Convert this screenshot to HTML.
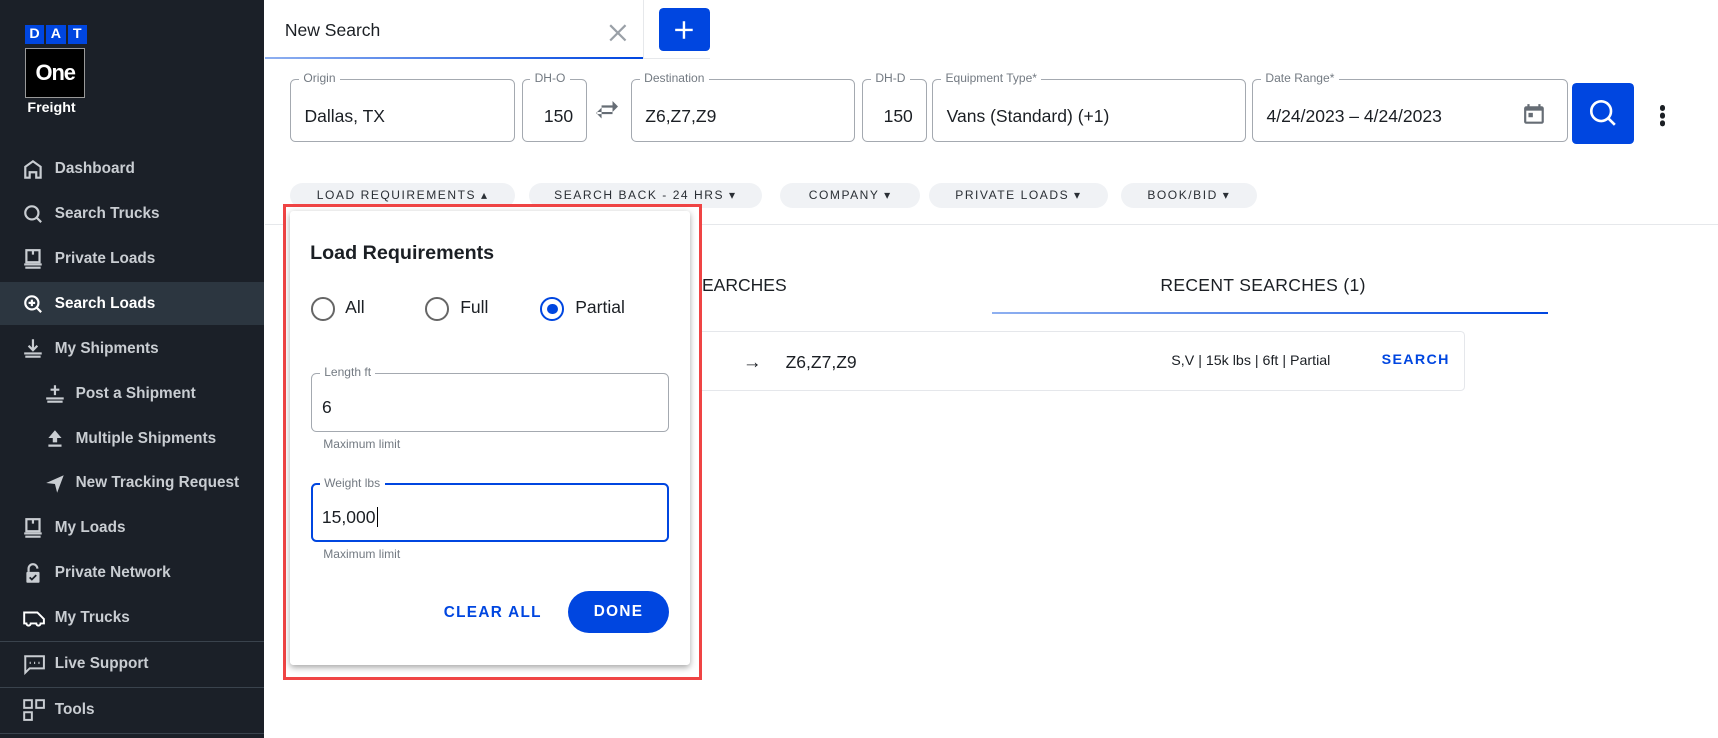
<!DOCTYPE html>
<html><head><meta charset="utf-8"><style>
html,body{margin:0;padding:0;overflow:hidden;background:#fff}
body{width:1718px;height:738px}
#r{zoom:1.0957;width:1568px;height:674px;position:relative;font-family:"Liberation Sans",sans-serif;color:#1b1f24}
.a{position:absolute}
#sb{left:0;top:0;width:241px;height:674px;background:#1b2028}
.nav{position:absolute;left:50px;font-weight:bold;font-size:14px;color:#c9cdd2;white-space:nowrap}
.ic{position:absolute;left:20px}
.dv{position:absolute;left:0;width:241px;height:1px;background:#3a434d}
.fld{position:absolute;top:72px;height:58px;border:1px solid #a4a9b0;border-radius:5px;box-sizing:border-box}
.fld .l{position:absolute;top:-8px;left:7px;background:#fff;padding:0 4px;font-size:11px;color:#737a82}
.fld .v{position:absolute;top:24px;font-size:16px;color:#1b1f24}
.chip{position:absolute;top:167px;height:23px;background:#f0f2f5;border-radius:12px;font-size:11px;letter-spacing:1.4px;color:#2a2f35;text-align:center;line-height:23px}
.db{width:17px;height:17px;background:#0046e0;color:#fff;font-weight:bold;font-size:13px;text-align:center;line-height:17px}
</style></head><body><div id="r">
<div id="sb" class="a">
 <div class="a" style="left:23px;top:23px;display:flex;gap:2px">
  <div class="db">D</div><div class="db" style="width:18px">A</div><div class="db">T</div>
 </div>
 <div class="a" style="left:23px;top:44px;width:53px;height:44px;background:#000;border:1px solid #999;color:#fff;font-weight:bold;font-size:20px;text-align:center;line-height:44px;letter-spacing:-1px">One</div>
 <div class="a" style="left:25px;top:91px;color:#fff;font-weight:bold;font-size:13px">Freight</div>
 <div class="a" style="left:0;top:257px;width:241px;height:40px;background:#2c3640"></div>
 <svg class="ic" style="top:144px" width="20" height="20" viewBox="0 0 20 20" fill="none" stroke="#c9cdd2" stroke-width="2"><path d="M3 18V8l7-5 7 5v10h-4v-5H7v5z"/></svg>
 <div class="nav" style="top:146px">Dashboard</div>
 <svg class="ic" style="top:185px" width="20" height="20" viewBox="0 0 20 20" fill="none" stroke="#c9cdd2" stroke-width="2"><circle cx="9" cy="9" r="6"/><path d="M13.5 13.5l4 4"/></svg>
 <div class="nav" style="top:187px">Search Trucks</div>
 <svg class="ic" style="top:226px" width="20" height="20" viewBox="0 0 20 20" fill="none" stroke="#c9cdd2" stroke-width="2"><rect x="4" y="2" width="12" height="11"/><path d="M10 2v4M2 15h16M3 18h14"/></svg>
 <div class="nav" style="top:228px">Private Loads</div>
 <svg class="ic" style="top:267px" width="20" height="20" viewBox="0 0 20 20" fill="none" stroke="#fff" stroke-width="2"><circle cx="9" cy="9" r="6"/><path d="M13.5 13.5l4 4M9 6v6M6 9h6"/></svg>
 <div class="nav" style="top:269px;color:#fff">Search Loads</div>
 <svg class="ic" style="top:308px" width="20" height="20" viewBox="0 0 20 20" fill="none" stroke="#c9cdd2" stroke-width="2"><path d="M10 2v9M6 8l4 4 4-4M2 15h16M3 18h14"/></svg>
 <div class="nav" style="top:310px">My Shipments</div>
 <svg class="ic" style="top:349px;left:40px" width="20" height="20" viewBox="0 0 20 20" fill="none" stroke="#c9cdd2" stroke-width="2"><path d="M10 3v9M6 7h8M2 15h16M3 18h14"/></svg>
 <div class="nav" style="top:351px;left:69px">Post a Shipment</div>
 <svg class="ic" style="top:390px;left:40px" width="20" height="20" viewBox="0 0 20 20" fill="#c9cdd2"><path d="M10 3l6 7h-4v4H8v-4H4zM4 16h12v2H4z"/></svg>
 <div class="nav" style="top:392px;left:69px">Multiple Shipments</div>
 <svg class="ic" style="top:431px;left:40px" width="20" height="20" viewBox="0 0 20 20" fill="#c9cdd2"><path d="M2 10L18 3 12 19 10 11z"/></svg>
 <div class="nav" style="top:433px;left:69px">New Tracking Request</div>
 <svg class="ic" style="top:472px" width="20" height="20" viewBox="0 0 20 20" fill="none" stroke="#c9cdd2" stroke-width="2"><rect x="4" y="2" width="12" height="11"/><path d="M10 2v4M2 15h16M3 18h14"/></svg>
 <div class="nav" style="top:474px">My Loads</div>
 <svg class="ic" style="top:513px" width="20" height="20" viewBox="0 0 20 20"><path d="M6 9V6a4 4 0 0 1 8 0" fill="none" stroke="#c9cdd2" stroke-width="2"/><rect x="4" y="9" width="12" height="10" rx="1" fill="#c9cdd2"/><path d="M7 14l2 2 4-4" fill="none" stroke="#1b2028" stroke-width="1.6"/></svg>
 <div class="nav" style="top:515px">Private Network</div>
 <svg class="ic" style="top:554px" width="22" height="20" viewBox="0 0 22 20" fill="none" stroke="#fff" stroke-width="1.8"><path d="M2 5h12l4 4 2 2v4h-3a2 2 0 0 1-4 0H8a2 2 0 0 1-4 0H2z"/></svg>
 <div class="nav" style="top:556px">My Trucks</div>
 <div class="dv" style="top:585px"></div>
 <svg class="ic" style="top:596px" width="22" height="20" viewBox="0 0 22 20" fill="none" stroke="#c9cdd2" stroke-width="1.8"><path d="M2 3h18v11H7l-4 4V3z"/><path d="M7 9h1M11 9h1M15 9h1" stroke-width="2"/></svg>
 <div class="nav" style="top:598px">Live Support</div>
 <div class="dv" style="top:627px"></div>
 <svg class="ic" style="top:637px" width="22" height="22" viewBox="0 0 22 22" fill="none" stroke="#c9cdd2" stroke-width="1.8"><rect x="2" y="2" width="7" height="7"/><rect x="13" y="2" width="7" height="7"/><rect x="2" y="13" width="7" height="7"/></svg>
 <div class="nav" style="top:640px">Tools</div>
 <div class="dv" style="top:669px"></div>
</div>
<!-- tab -->
<div class="a" style="left:260px;top:18px;font-size:16px">New Search</div>
<svg class="a" style="left:555px;top:21px" width="18" height="18" viewBox="0 0 18 18" stroke="#9aa0a7" stroke-width="2"><path d="M2 2l14 14M16 2L2 16"/></svg>
<div class="a" style="left:587px;top:0;width:1px;height:54px;background:#e6e8eb"></div>
<div class="a" style="left:242px;top:52px;width:345px;height:2px;background:linear-gradient(90deg,#8fb0f0,#0046e0)"></div>
<div class="a" style="left:587px;top:53px;width:61px;height:1px;background:#e6e8eb"></div>
<div class="a" style="left:601px;top:7px;width:47px;height:40px;background:#0046e0;border-radius:4px"></div>
<svg class="a" style="left:614px;top:17px" width="20" height="20" viewBox="0 0 20 20" stroke="#fff" stroke-width="2.2"><path d="M10 2v16M2 10h16"/></svg>
<!-- fields -->
<div class="fld" style="left:265px;width:205px"><span class="l">Origin</span><span class="v" style="left:12px">Dallas, TX</span></div>
<div class="fld" style="left:476px;width:60px"><span class="l">DH-O</span><span class="v" style="right:12px">150</span></div>
<svg class="a" style="left:543px;top:92px" width="22" height="18" viewBox="0 0 22 18" fill="#666d75"><path d="M2 11h14v2H2zM6 7l-5 5 5 5zM6 5h14v2H6zM16 1l5 5-5 5z" transform="translate(0,-1)"/></svg>
<div class="fld" style="left:576px;width:204px"><span class="l">Destination</span><span class="v" style="left:12px">Z6,Z7,Z9</span></div>
<div class="fld" style="left:787px;width:59px"><span class="l">DH-D</span><span class="v" style="right:12px">150</span></div>
<div class="fld" style="left:851px;width:286px"><span class="l">Equipment Type*</span><span class="v" style="left:12px">Vans (Standard) (+1)</span></div>
<div class="fld" style="left:1143px;width:288px"><span class="l">Date Range*</span><span class="v" style="left:12px">4/24/2023 – 4/24/2023</span>
<svg class="a" style="left:246px;top:21px" width="20" height="20" viewBox="0 0 20 20"><rect x="1" y="3" width="18" height="16" rx="2" fill="#666d75"/><rect x="3" y="7" width="14" height="10" fill="#fff"/><rect x="5" y="9" width="4" height="4" fill="#666d75"/><path d="M5 1v4M15 1v4" stroke="#666d75" stroke-width="2"/></svg></div>
<div class="a" style="left:1435px;top:76px;width:56px;height:55px;background:#0046e0;border-radius:4px"></div>
<svg class="a" style="left:1449px;top:89px" width="28" height="28" viewBox="0 0 28 28" fill="none" stroke="#fff" stroke-width="2.4"><circle cx="12" cy="12" r="9"/><path d="M18.5 18.5l6 6"/></svg>
<div class="a" style="left:1515px;top:96px;width:5px;height:5px;border-radius:3px;background:#1b1f24;box-shadow:0 7px 0 #1b1f24,0 14px 0 #1b1f24"></div>
<!-- chips -->
<div class="chip" style="left:265px;width:205px">LOAD REQUIREMENTS ▴</div>
<div class="chip" style="left:483px;width:212px">SEARCH BACK - 24 HRS ▾</div>
<div class="chip" style="left:712px;width:128px">COMPANY ▾</div>
<div class="chip" style="left:848px;width:163px">PRIVATE LOADS ▾</div>
<div class="chip" style="left:1023px;width:124px">BOOK/BID ▾</div>
<div class="a" style="left:242px;top:204px;width:1326px;height:1px;background:#e6e8eb"></div>
<!-- tabs -->
<div class="a" style="left:630px;top:251px;font-size:16px">SEARCHES</div>
<div class="a" style="left:1059px;top:251px;font-size:16px;letter-spacing:0.3px">RECENT SEARCHES (1)</div>
<div class="a" style="left:905px;top:285px;width:508px;height:2px;background:linear-gradient(90deg,#8fb0f0,#0046e0)"></div>
<div class="a" style="left:600px;top:302px;width:737px;height:55px;border:1px solid #e5e7eb;border-radius:4px;box-sizing:border-box"></div>
<div class="a" style="left:678px;top:320px;font-size:17px;font-weight:bold">→</div>
<div class="a" style="left:717px;top:321px;font-size:16px">Z6,Z7,Z9</div>
<div class="a" style="left:1069px;top:322px;font-size:13px">S,V | 15k lbs | 6ft | Partial</div>
<div class="a" style="left:1261px;top:321px;font-size:13px;font-weight:bold;letter-spacing:1.2px;color:#0046e0">SEARCH</div>
<!-- popup -->
<div class="a" style="left:258px;top:186px;width:383px;height:435px;border:3px solid #ef4444;box-sizing:border-box;background:#fff"></div>
<div class="a" style="left:265px;top:193px;width:365px;height:414px;background:#fff;border-radius:3px;box-shadow:0 2px 6px rgba(0,0,0,.35)"></div>
<div class="a" style="left:283px;top:221px;font-size:18px;font-weight:bold">Load Requirements</div>
<div class="a" style="left:284px;top:271px;width:18px;height:18px;border:2px solid #666;border-radius:50%"></div>
<div class="a" style="left:315px;top:271px;font-size:16px">All</div>
<div class="a" style="left:388px;top:271px;width:18px;height:18px;border:2px solid #666;border-radius:50%"></div>
<div class="a" style="left:420px;top:271px;font-size:16px">Full</div>
<div class="a" style="left:493px;top:271px;width:18px;height:18px;border:2px solid #0046e0;border-radius:50%"></div>
<div class="a" style="left:499px;top:277px;width:10px;height:10px;background:#0046e0;border-radius:50%"></div>
<div class="a" style="left:525px;top:271px;font-size:16px">Partial</div>
<div class="fld" style="left:284px;top:340px;width:327px;height:54px"><span class="l">Length ft</span><span class="v" style="left:9px;top:21px">6</span></div>
<div class="a" style="left:295px;top:399px;font-size:11px;color:#737a82">Maximum limit</div>
<div class="fld" style="left:284px;top:441px;width:327px;height:54px;border:2px solid #0046e0"><span class="l" style="top:-8px;left:6px">Weight lbs</span><span class="v" style="left:8px;top:20px">15,000<span style="border-left:1px solid #000;margin-left:1px"></span></span></div>
<div class="a" style="left:295px;top:499px;font-size:11px;color:#737a82">Maximum limit</div>
<div class="a" style="left:405px;top:551px;font-size:14px;font-weight:bold;letter-spacing:1.2px;color:#0046e0">CLEAR ALL</div>
<div class="a" style="left:518px;top:539px;width:93px;height:39px;background:#0046e0;border-radius:20px;color:#fff;font-size:14px;font-weight:bold;letter-spacing:1.2px;text-align:center;line-height:39px">DONE</div>
</div></body></html>
